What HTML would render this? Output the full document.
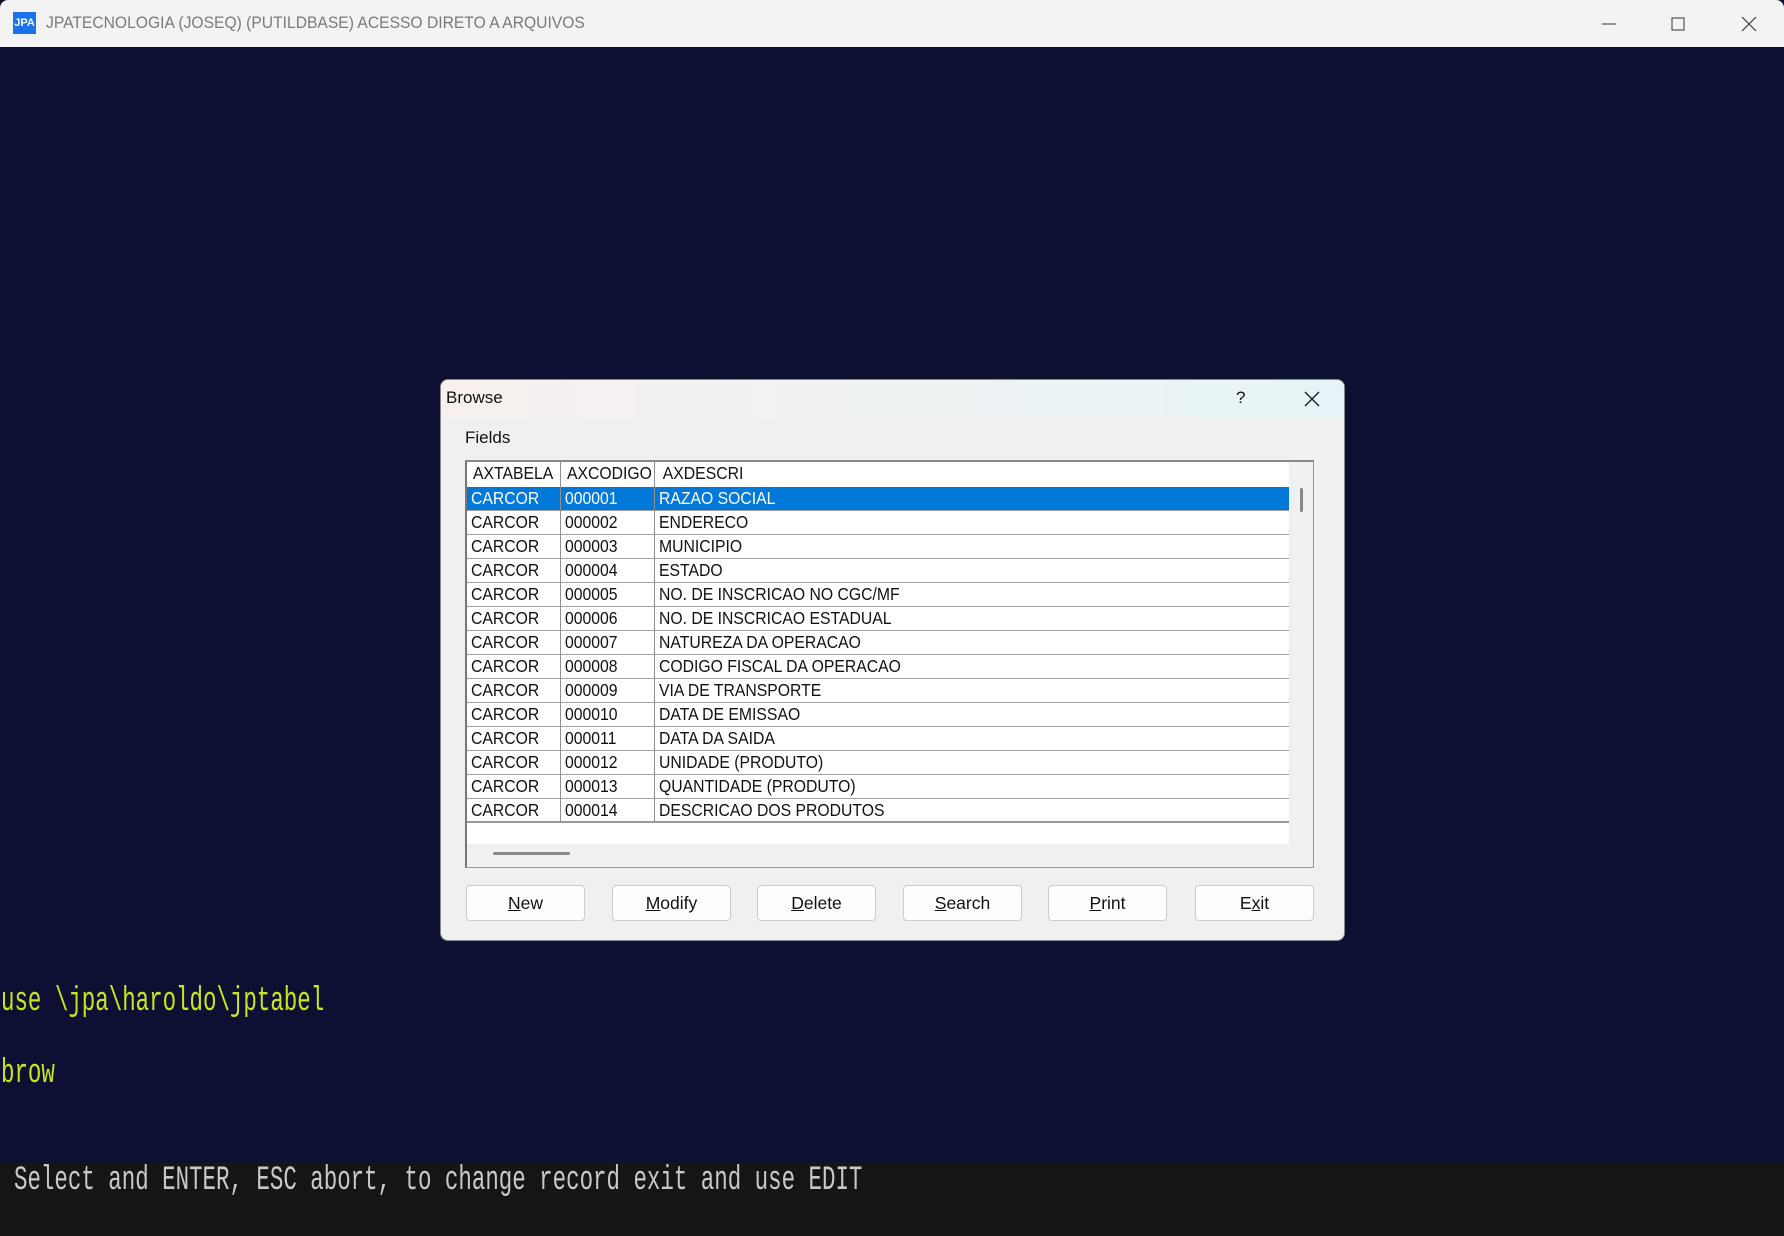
<!DOCTYPE html>
<html><head><meta charset="utf-8"><style>
*{margin:0;padding:0;box-sizing:border-box}
body{width:1784px;height:1236px;overflow:hidden;background:#0d1033;font-family:"Liberation Sans",sans-serif;position:relative}
.tb{position:absolute;left:0;top:0;width:1784px;height:47px;background:#f3f3f3;border-top-left-radius:8px;border-top-right-radius:8px}
.tb .t{position:absolute;left:46px;top:13px;font-size:17px;color:#7a7a7a;transform-origin:0 0;transform:scaleX(.92);white-space:nowrap}
.logo{position:absolute;left:13px;top:12px;width:23px;height:22px;background:#1a73e8;color:#fff;font-size:11px;font-weight:bold;line-height:22px;text-align:center}
.con{position:absolute;font-family:"Liberation Mono",monospace;font-size:34px;transform-origin:0 0;transform:scaleX(.66);white-space:pre}
.bar{position:absolute;left:0;top:1162px;width:1784px;height:74px;background:#151515}
.dlg{position:absolute;left:440px;top:379px;width:905px;height:562px;background:#f0f0f0;border:1px solid #888;border-radius:8px;overflow:hidden}
.dt{height:37px;background:linear-gradient(90deg,#f7f0ee,#e6f4f7);position:relative}
.dt span{position:absolute;left:5px;top:8px;font-size:17px;color:#111}
.lb{position:absolute;left:24px;top:80px;width:849px;height:408px;border:1px solid #999;border-left:2px solid #777;border-top:2px solid #888;background:#f0f0f0}
.in{position:absolute;left:0;top:0;width:822px;height:382px;background:#fff;overflow:hidden}
.row{position:absolute;left:0;width:822px;height:24px;border-bottom:1px solid #a0a0a0;font-size:17.5px;line-height:23px;color:#111}
.row span{position:absolute;top:0;transform-origin:0 0;transform:scaleX(.9);white-space:nowrap}
.c1{left:4px}.c2{left:98px}.c3{left:192px}
.sep{position:absolute;top:0;width:1px;height:360px;background:#909090}
.sel{background:#0078d7;color:#fff}
.btn{position:absolute;top:505px;height:36px;width:119px;background:#fdfdfd;border:1px solid #ccc;border-radius:4px;font-size:17.5px;text-align:center;line-height:34px;color:#111}
</style></head><body>
<div class="tb"><div class="logo">JPA</div><div class="t">JPATECNOLOGIA (JOSEQ) (PUTILDBASE) ACESSO DIRETO A ARQUIVOS</div>
<svg style="position:absolute;left:1600px;top:14px" width="170" height="20"><line x1="2" y1="10" x2="16" y2="10" stroke="#555" stroke-width="1.2"/><rect x="72" y="4" width="12" height="12" fill="none" stroke="#555" stroke-width="1.2"/><path d="M142 3 L156 17 M156 3 L142 17" stroke="#555" stroke-width="1.3"/></svg></div>
<div class="con" style="left:1px;top:983px;color:#c8e61c">use \jpa\haroldo\jptabel</div>
<div class="con" style="left:1px;top:1055px;color:#c8e61c">brow</div>
<div class="bar"></div>
<div class="con" style="left:14px;top:1162px;color:#c8c8c8">Select and ENTER, ESC abort, to change record exit and use EDIT</div>
<div class="dlg">
<div class="dt"><span>Browse</span><span style="left:795px;font-size:17px">?</span>
<svg style="position:absolute;left:862px;top:10px" width="18" height="18"><path d="M2 2L16 16M16 2L2 16" stroke="#222" stroke-width="1.5"/></svg></div>
<div style="position:absolute;left:24px;top:48px;font-size:17px;color:#111">Fields</div>
<div class="lb"><div class="in">
<div class="row" style="top:0;border-bottom:none"><span style="left:6px">AXTABELA</span><span style="left:100px">AXCODIGO</span><span style="left:194px;background:#fff;padding-left:2px">AXDESCRI</span></div>
<div class="row sel" style="top:25px"><span class="c1">CARCOR</span><span class="c2">000001</span><span class="c3">RAZAO SOCIAL</span></div>
<div class="row" style="top:49px"><span class="c1">CARCOR</span><span class="c2">000002</span><span class="c3">ENDERECO</span></div>
<div class="row" style="top:73px"><span class="c1">CARCOR</span><span class="c2">000003</span><span class="c3">MUNICIPIO</span></div>
<div class="row" style="top:97px"><span class="c1">CARCOR</span><span class="c2">000004</span><span class="c3">ESTADO</span></div>
<div class="row" style="top:121px"><span class="c1">CARCOR</span><span class="c2">000005</span><span class="c3">NO. DE INSCRICAO NO CGC/MF</span></div>
<div class="row" style="top:145px"><span class="c1">CARCOR</span><span class="c2">000006</span><span class="c3">NO. DE INSCRICAO ESTADUAL</span></div>
<div class="row" style="top:169px"><span class="c1">CARCOR</span><span class="c2">000007</span><span class="c3">NATUREZA DA OPERACAO</span></div>
<div class="row" style="top:193px"><span class="c1">CARCOR</span><span class="c2">000008</span><span class="c3">CODIGO FISCAL DA OPERACAO</span></div>
<div class="row" style="top:217px"><span class="c1">CARCOR</span><span class="c2">000009</span><span class="c3">VIA DE TRANSPORTE</span></div>
<div class="row" style="top:241px"><span class="c1">CARCOR</span><span class="c2">000010</span><span class="c3">DATA DE EMISSAO</span></div>
<div class="row" style="top:265px"><span class="c1">CARCOR</span><span class="c2">000011</span><span class="c3">DATA DA SAIDA</span></div>
<div class="row" style="top:289px"><span class="c1">CARCOR</span><span class="c2">000012</span><span class="c3">UNIDADE (PRODUTO)</span></div>
<div class="row" style="top:313px"><span class="c1">CARCOR</span><span class="c2">000013</span><span class="c3">QUANTIDADE (PRODUTO)</span></div>
<div class="row" style="top:337px;border-bottom:2px solid #999"><span class="c1">CARCOR</span><span class="c2">000014</span><span class="c3">DESCRICAO DOS PRODUTOS</span></div>
<div class="sep" style="left:93px"></div><div class="sep" style="left:187px"></div>
</div>
<div style="position:absolute;left:833px;top:26px;width:3px;height:24px;background:#888;border-radius:2px"></div>
<div style="position:absolute;left:26px;top:390px;width:77px;height:3px;background:#888;border-radius:2px"></div>
</div>
<div class="btn" style="left:25px"><u>N</u>ew</div>
<div class="btn" style="left:171px"><u>M</u>odify</div>
<div class="btn" style="left:316px"><u>D</u>elete</div>
<div class="btn" style="left:462px"><u>S</u>earch</div>
<div class="btn" style="left:607px"><u>P</u>rint</div>
<div class="btn" style="left:754px">E<u>x</u>it</div>
</div>
</body></html>
